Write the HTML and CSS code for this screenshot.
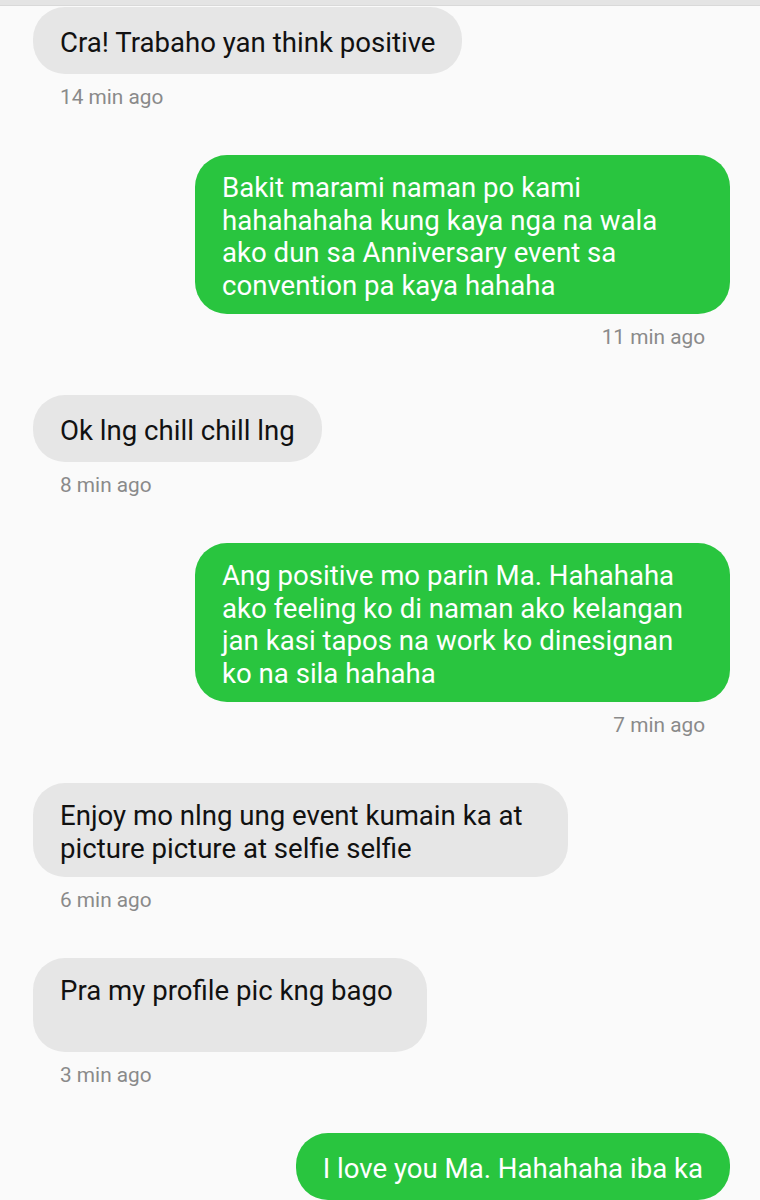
FILE: index.html
```html
<!DOCTYPE html>
<html lang="en">

<head>
    <meta charset="UTF-8">
    <meta name="viewport" content="width=device-width, initial-scale=1.0">
    <title>Messages</title>
    <link rel="stylesheet" href="styles.css">
</head>

<body>

    <!-- Header edge -->
    <div class="top-bar"></div>

    <!-- Conversation -->
    <div class="thread">
        <div class="msg in">
            <div class="bubble single">Cra! Trabaho yan think positive</div>
            <div class="meta">14 min ago</div>
        </div>

        <div class="msg out">
            <div class="bubble">Bakit marami naman po kami hahahahaha kung kaya nga na wala ako dun sa Anniversary event sa convention pa kaya hahaha</div>
            <div class="meta">11 min ago</div>
        </div>

        <div class="msg in">
            <div class="bubble single">Ok lng chill chill lng</div>
            <div class="meta">8 min ago</div>
        </div>

        <div class="msg out">
            <div class="bubble">Ang positive mo parin Ma. Hahahaha ako feeling ko di naman ako kelangan jan kasi tapos na work ko dinesignan ko na sila hahaha</div>
            <div class="meta">7 min ago</div>
        </div>

        <div class="msg in">
            <div class="bubble">Enjoy mo nlng ung event kumain ka at picture picture at selfie selfie</div>
            <div class="meta">6 min ago</div>
        </div>

        <div class="msg in">
            <div class="bubble">Pra my profile pic kng bago&nbsp;<br>&nbsp;</div>
            <div class="meta">3 min ago</div>
        </div>

        <div class="msg out">
            <div class="bubble single">I love you Ma. Hahahaha iba ka</div>
        </div>
    </div>

</body>

</html>
```

FILE: styles.css
```css
/* General Styling */
body {
    font-family: Roboto, "Noto Sans", Arial, sans-serif;
    background-color: #fafafa;
    margin: 0;
    overflow: hidden;
}

/* Header edge */
.top-bar {
    height: 5px;
    background-color: #e4e4e4;
    border-bottom: 1px solid #d9d9d9;
}

/* Thread */
.thread {
    display: flex;
    flex-direction: column;
    gap: 46px;
    padding: 1px 30px 0 33px;
}

.msg {
    display: flex;
    flex-direction: column;
}

.msg.in {
    align-items: flex-start;
}

.msg.out {
    align-items: flex-end;
}

/* Bubbles */
.bubble {
    box-sizing: border-box;
    max-width: 535px;
    padding: 17px 27px 12px;
    border-radius: 32px;
    font-size: 27.6px;
    line-height: 32.5px;
}

.bubble.single {
    min-height: 67px;
    padding-top: 20px;
    padding-bottom: 14px;
}

.msg.in .bubble {
    background-color: #e6e6e6;
    color: #111;
}

.msg.out .bubble {
    background-color: #29c53f;
    color: #fff;
}

/* Time stamps */
.meta {
    margin-top: 11px;
    padding: 0 27px;
    font-size: 20.8px;
    line-height: 24px;
    color: #8a8a8a;
}

.msg.out .meta {
    padding: 0 25px;
}
```
